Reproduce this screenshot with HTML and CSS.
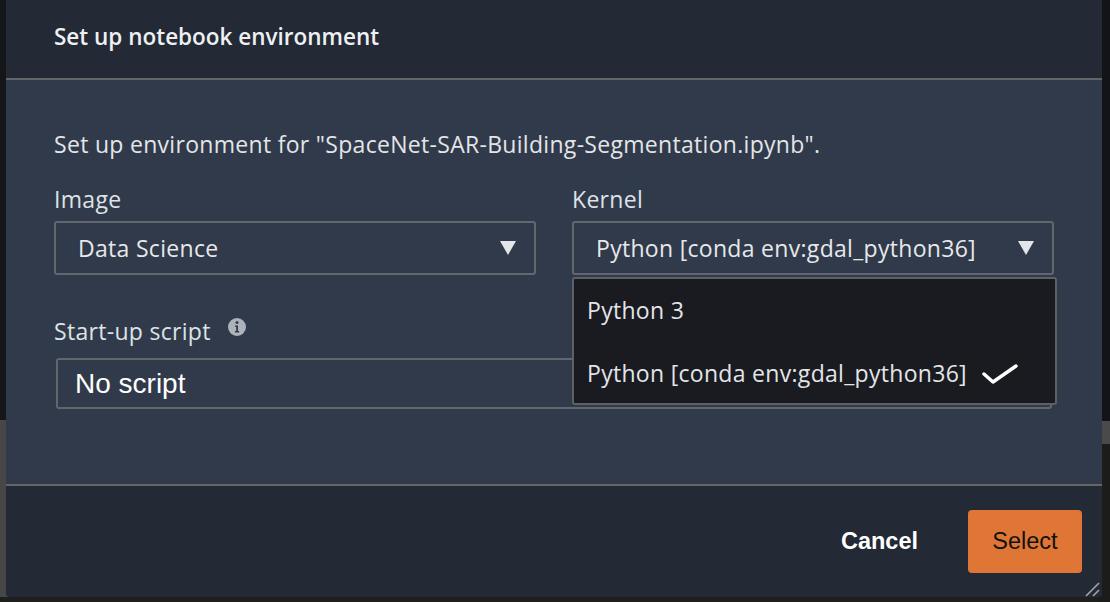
FILE: index.html
```html
<!DOCTYPE html>
<html lang="en">
<head>
<meta charset="utf-8">
<title>Set up notebook environment</title>
<link rel="stylesheet" href="styles.css">
</head>
<body>
<div class="modal">
  <header class="modal-header">
    <h2 class="modal-title">Set up notebook environment</h2>
  </header>
  <div class="modal-body">
    <p class="desc">Set up environment for "SpaceNet-SAR-Building-Segmentation.ipynb".</p>
    <div class="grid">
      <div class="field">
        <div class="label">Image</div>
        <div class="select">
          <span class="value">Data Science</span>
          <span class="caret"></span>
        </div>
      </div>
      <div class="field">
        <div class="label">Kernel</div>
        <div class="select-wrap">
          <div class="select">
            <span class="value">Python [conda env:gdal_python36]</span>
            <span class="caret"></span>
          </div>
          <ul class="menu">
            <li class="item">Python 3</li>
            <li class="item selected">Python [conda env:gdal_python36]
              <svg class="check" width="38" height="22" viewBox="0 0 38 22"><polyline points="3,11 12,19 35,3" fill="none" stroke="#ffffff" stroke-width="3.4" stroke-linecap="round" stroke-linejoin="round"/></svg>
            </li>
          </ul>
        </div>
      </div>
    </div>
    <div class="field script">
      <div class="label">Start-up script
        <svg class="info" width="18" height="18" viewBox="0 0 18 18"><circle cx="9" cy="9" r="9" fill="#aeb3bb"/><circle cx="9" cy="4.6" r="1.5" fill="#303a4a"/><path d="M7.2 7.6h2.8v5.4h1.2v1.5H7v-1.5h1.2V9.1h-1z" fill="#303a4a"/></svg>
      </div>
      <div class="select plain">No script</div>
    </div>
  </div>
  <footer class="modal-footer">
    <button class="btn-link">Cancel</button>
    <button class="btn-primary">Select</button>
    <svg class="resize" width="15" height="15" viewBox="0 0 15 15"><path d="M1 14L14 1M8 14L14 8" stroke="#a3a3a3" stroke-width="1.6"/></svg>
  </footer>
</div>
</body>
</html>
```

FILE: styles.css
```css
* { box-sizing: border-box; }

html, body {
  margin: 0;
  padding: 0;
  width: 1110px;
  height: 602px;
  overflow: hidden;
}

body {
  font-family: "Open Sans", "Noto Sans", sans-serif;
  background:
    linear-gradient(to bottom, #14161a 0 420px, #474747 420px 597px, #1f201d 597px) left top / 23px 602px no-repeat,
    linear-gradient(to bottom, #121418 0 421px, #4a4a4a 421px 444px, #1c1d1b 444px) right top / 12px 602px no-repeat,
    #1f201d;
}

.modal {
  margin-left: 6px;
  width: 1096px;
  height: 597px;
  display: flex;
  flex-direction: column;
  background: #303a4a;
  border-radius: 0 0 4px 4px;
}

.modal-header {
  height: 80px;
  flex: 0 0 80px;
  background: #232935;
  border-bottom: 2px solid #636569;
  display: flex;
  align-items: center;
  padding: 0 0 4px 48px;
}

.modal-title {
  margin: 0;
  font-size: 22.5px;
  font-weight: 600;
  line-height: 30px;
  color: #eef0f2;
}

.modal-body {
  flex: 1;
  padding: 52px 48px 0 48px;
  color: #e1e4e8;
  letter-spacing: 0.3px;
}

.desc {
  margin: 0;
  font-size: 23px;
  line-height: 24px;
  color: #e3e5e8;
}

.grid {
  margin-top: 31px;
  display: grid;
  grid-template-columns: 482px 482px;
  column-gap: 36px;
}

.label {
  font-size: 23px;
  line-height: 24px;
  color: #dfe2e6;
  margin-bottom: 10px;
  display: flex;
  align-items: center;
}

.select-wrap {
  position: relative;
}

.select {
  height: 54px;
  border: 2px solid #62676f;
  border-radius: 3px;
  display: flex;
  align-items: center;
  justify-content: space-between;
  padding: 0 18px 0 22px;
  font-size: 23px;
  color: #e6e8eb;
}

.caret {
  width: 0;
  height: 0;
  border-left: 8.5px solid transparent;
  border-right: 8.5px solid transparent;
  border-top: 14px solid #e3e5e8;
}

.menu {
  position: absolute;
  top: 56px;
  left: 0;
  width: 485px;
  margin: 0;
  padding: 0;
  list-style: none;
  background: #1a1b20;
  border: 2px solid #5d6065;
  border-radius: 3px;
  z-index: 2;
}

.item {
  height: 62px;
  display: flex;
  align-items: center;
  padding: 0 0 0 13px;
  font-size: 23px;
  color: #e3e5e8;
}

.item.selected {
  padding-top: 2px;
}

.check {
  margin-left: 14px;
  margin-top: 2px;
}

.script {
  margin-top: 44px;
}

.script .label {
  margin-bottom: 15px;
}

.info {
  margin-left: 17px;
  margin-top: -8px;
}

.select.plain {
  margin: 0 2px;
  height: 51px;
  padding-left: 17px;
  font-family: "Liberation Sans", Arial, sans-serif;
  font-size: 28px;
  letter-spacing: 0;
  color: #ffffff;
}

.modal-footer {
  position: relative;
  flex: 0 0 113px;
  background: #232935;
  border-top: 2px solid #636569;
  border-radius: 0 0 4px 4px;
  display: flex;
  align-items: center;
  justify-content: flex-end;
  padding: 0 20px 0 0;
  gap: 50px;
}

.btn-link {
  background: none;
  border: none;
  padding: 0;
  font-family: "Liberation Sans", Arial, sans-serif;
  font-weight: bold;
  font-size: 23.5px;
  color: #ffffff;
}

.btn-primary {
  width: 114px;
  height: 63px;
  background: #e07635;
  border: none;
  border-radius: 4px;
  font-family: "Liberation Sans", Arial, sans-serif;
  font-size: 23.5px;
  color: #111111;
}

.resize {
  position: absolute;
  right: 2px;
  bottom: 0;
}
```
